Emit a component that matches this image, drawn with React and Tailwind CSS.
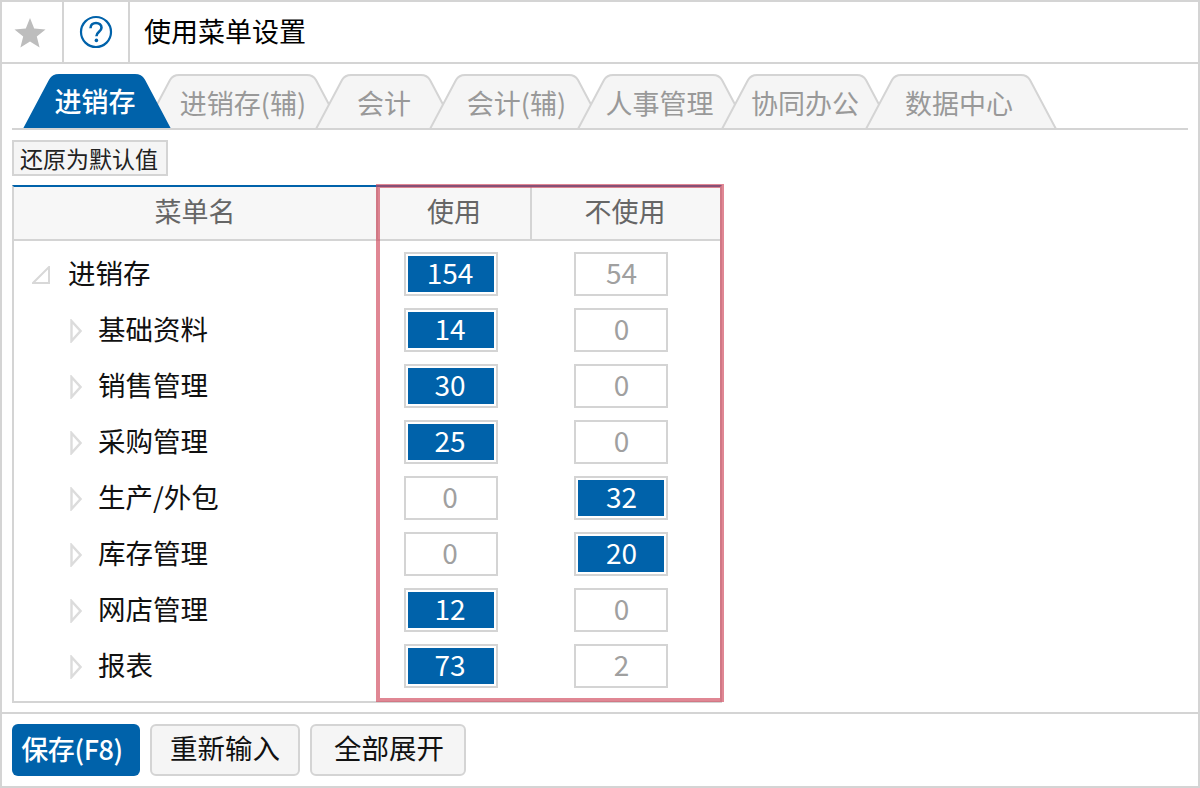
import React from "react";

const tabs = [
    { label: "进销存", width: 148, active: true, nudge: "pr-[4px]" },
    { label: "进销存(辅)", width: 200, nudge: "" },
    { label: "会计", width: 142, nudge: "pr-[4px]" },
    { label: "会计(辅)", width: 176, nudge: "pr-[1px]" },
    { label: "人事管理", width: 172, nudge: "pr-[7px]" },
    { label: "协同办公", width: 172, nudge: "pr-[4px]" },
    { label: "数据中心", width: 192, nudge: "pr-[4px]" },
];

const rows = [
    { name: "基础资料", used: 14, unused: 0 },
    { name: "销售管理", used: 30, unused: 0 },
    { name: "采购管理", used: 25, unused: 0 },
    { name: "生产/外包", used: 0, unused: 32, flip: true },
    { name: "库存管理", used: 0, unused: 20, flip: true },
    { name: "网店管理", used: 12, unused: 0 },
    { name: "报表", used: 73, unused: 2 },
];

const Tab = ({ label, width, active, nudge }) => {
    const d = `M1 55 L27 6 Q30 1 36 1 H${width - 36} Q${width - 30} 1 ${width - 27} 6 L${width - 1} 55`;
    return (
        <div
            className={`relative h-[54px] shrink-0 flex items-center justify-center -ml-[28px] first:ml-0 text-[27px] ${nudge} ${active ? "z-10 text-white font-medium pb-[2px]" : "text-[#999999] pt-[2px]"}`}
            style={{ width }}
        >
            <svg className="absolute inset-0" width={width} height="54" viewBox={`0 0 ${width} 54`}>
                <path d={d} fill={active ? "#0062aa" : "#f5f5f5"} stroke={active ? "#0062aa" : "#d4d4d4"} strokeWidth="2" />
            </svg>
            <span className="relative leading-none whitespace-nowrap">{label}</span>
        </div>
    );
};

const Count = ({ value, on, right }) => (
    <div className="w-[94px] h-[44px] border-2 border-[#d4d4d4] p-[2px] shrink-0 bg-white">
        <div className={`h-full flex items-center justify-center text-[28px] leading-none pb-[4px] ${right ? "pl-[1px]" : "pr-[2px]"} ${on ? "bg-[#0062aa] text-white" : "text-[#a0a0a0]"}`}>
            {value}
        </div>
    </div>
);

const Row = ({ name, used, unused, root, flip }) => (
    <div className="h-[56px] flex items-start">
        <div className={`w-[390px] h-[44px] shrink-0 flex items-center text-[27.5px] text-[#111111] ${root ? "pl-[18px]" : "pl-[56px]"}`}>
            {root ? (
                <svg className="w-[18px] h-[18px] mr-[18px] mt-[2px]" viewBox="0 0 18 18">
                    <path d="M1 17 H17 V1 Z" fill="none" stroke="#d8d8d8" strokeWidth="2" />
                </svg>
            ) : (
                <svg className="w-[12px] h-[24px] mr-[16px] mt-[2px]" viewBox="0 0 12 24">
                    <path d="M1.5 2 L10.5 12 L1.5 22 Z" fill="none" stroke="#dcdcdc" strokeWidth="2.4" />
                </svg>
            )}
            <span className="leading-none -translate-y-[1px]">{name}</span>
        </div>
        <Count value={used} on={!flip} />
        <div className="ml-[76px]">
            <Count value={unused} on={flip} right />
        </div>
    </div>
);

const App = () => {
    return (
        <div className="w-[1200px] h-[788px] border-2 border-[#d4d4d4] bg-white flex flex-col overflow-hidden font-['Noto_Sans_CJK_SC','Noto_Sans',sans-serif]">
            <div className="h-[62px] shrink-0 border-b-2 border-[#d4d4d4] flex">
                <div className="w-[62px] border-r-2 border-[#d4d4d4] flex items-center justify-center pr-[4px] pt-[2px]">
                    <svg width="32" height="32" viewBox="0 0 32 32">
                        <path d="M16 1 L20.2 11.6 L31.5 12.4 L22.8 19.6 L25.6 30.6 L16 24.6 L6.4 30.6 L9.2 19.6 L0.5 12.4 L11.8 11.6 Z" fill="#bdbdbd" />
                    </svg>
                </div>
                <div className="w-[66px] border-r-2 border-[#d4d4d4] flex items-center justify-center">
                    <svg width="34" height="34" viewBox="0 0 34 34">
                        <circle cx="17" cy="17" r="15" fill="none" stroke="#0062aa" strokeWidth="2.2" />
                        <path d="M11.5 13.2 C11.5 9.8 14 8 17 8 C20.2 8 22.5 9.9 22.5 12.8 C22.5 16.6 17.4 17 17.4 21.2" fill="none" stroke="#0062aa" strokeWidth="2.6" />
                        <circle cx="17.4" cy="25.4" r="1.8" fill="#0062aa" />
                    </svg>
                </div>
                <div className="pl-[14px] pb-[4px] flex items-center text-[27px] text-[#000000] leading-none">使用菜单设置</div>
            </div>

            <div className="flex-1 px-[10px]">
                <div className="mt-[10px] h-[56px] border-b-2 border-[#d4d4d4] flex pl-[11px]">
                    {tabs.map((tab) => (
                        <Tab key={tab.label} {...tab} />
                    ))}
                </div>

                <button
                    type="button"
                    className="block mt-[10px] w-[156px] h-[36px] pr-[2px] border-2 border-[#d4d4d4] bg-[#f5f5f5] text-[23px] leading-none text-[#222222]"
                >
                    还原为默认值
                </button>

                <div className="relative mt-[9px] w-[710px] h-[518px] border-2 border-t-[#0062aa] border-x-[#d4d4d4] border-b-[#d4d4d4]">
                    <div className="h-[54px] flex border-b-2 border-[#d4d4d4] bg-[#f7f7f7] text-[27px] text-[#666666] leading-none">
                        <div className="w-[364px] border-r-2 border-[#d4d4d4] flex items-center justify-center pb-[6px]">菜单名</div>
                        <div className="w-[154px] border-r-2 border-[#d4d4d4] flex items-center justify-center pb-[6px]">使用</div>
                        <div className="flex-1 flex items-center justify-center pr-[2px] pb-[6px]">不使用</div>
                    </div>
                    <div className="pt-[11px]">
                        <Row name="进销存" used={154} unused={54} root />
                        {rows.map((row) => (
                            <Row key={row.name} {...row} />
                        ))}
                    </div>
                    <div className="absolute -top-[3px] left-[362px] w-[348px] h-[518px] border-4 border-[rgba(208,70,90,0.65)] pointer-events-none" />
                </div>
            </div>

            <div className="h-[74px] shrink-0 border-t-2 border-[#d4d4d4] px-[10px] pt-[10px] flex gap-[10px] text-[27.5px] leading-none">
                <button type="button" className="w-[128px] h-[52px] pr-[8px] pb-[4px] rounded-[6px] bg-[#0062aa] text-white text-[27px] tracking-[-0.4px] font-medium">保存(F8)</button>
                <button type="button" className="w-[150px] h-[52px] pb-[4px] rounded-[6px] border-2 border-[#d4d4d4] bg-[#f5f5f5] text-[#111111]">重新输入</button>
                <button type="button" className="w-[156px] h-[52px] pb-[4px] pl-[2px] rounded-[6px] border-2 border-[#d4d4d4] bg-[#f5f5f5] text-[#111111]">全部展开</button>
            </div>
        </div>
    );
};

export default App;
